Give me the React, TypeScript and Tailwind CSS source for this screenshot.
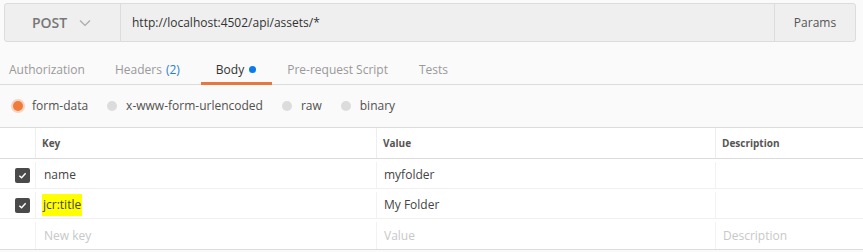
const tabs = [
  { label: "Authorization", cls: "" },
  { label: "Headers", count: "(2)", cls: "ml-[30px]" },
  { label: "Body", active: true, cls: "ml-[21px] pl-[15px] pr-[16px]" },
  { label: "Pre-request Script", cls: "ml-[15px]" },
  { label: "Tests", cls: "ml-[31px]" },
];

const modes = ["form-data", "x-www-form-urlencoded", "raw", "binary"];

const rows = [
  { key: "name", value: "myfolder" },
  { key: "jcr:title", value: "My Folder", highlight: true },
];

const Check = () => (
  <span className="flex h-[15px] w-[15px] items-center justify-center rounded-[2px] bg-[#4a4a4a]">
    <svg width="9" height="9" viewBox="0 0 10 10" fill="none">
      <path d="M1.5 5.2 L4 7.5 L8.5 2.5" stroke="#fff" strokeWidth="1.6" />
    </svg>
  </span>
);

export default function App() {
  return (
    <div
      className="h-[252px] w-[863px] overflow-hidden bg-[#fafafa] text-[#505050]"
      style={{ fontFamily: '"Open Sans", sans-serif' }}
    >
      {/* Request bar */}
      <div className="pl-1 pr-[7px] pt-[3px]">
        <div className="flex h-[39px] rounded-[3px] border border-[#dcdcdc] bg-[#efefef]">
          <div className="flex w-[116px] items-center justify-center gap-3 border-r border-[#dcdcdc] pr-1 pl-[2px] text-[14px] font-semibold text-[#777]">
            POST
            <svg width="12" height="8" viewBox="0 0 12 8" fill="none">
              <path d="M1 1.5 L6 6.5 L11 1.5" stroke="#aaa" strokeWidth="1.2" />
            </svg>
          </div>
          <div className="flex flex-1 items-center pl-[11px] text-[12px] text-[#333]">
            http://localhost:4502/api/assets/*
          </div>
          <div className="flex w-[81px] items-center justify-center border-l border-[#dcdcdc] text-[12px] text-[#555]">
            Params
          </div>
        </div>
      </div>

      {/* Tabs */}
      <div className="mt-[13px] flex h-[30px] border-b border-[#dcdcdc] pl-[9px] text-[12px]">
        {tabs.map((t) => (
          <div
            key={t.label}
            className={`relative flex items-center ${t.cls} ${
              t.active ? "text-[#333]" : "text-[#999]"
            }`}
          >
            {t.label}
            {t.count && <span className="ml-1 text-[#2a7fd4]">{t.count}</span>}
            {t.active && (
              <span className="ml-[5px] h-[7px] w-[7px] rounded-full bg-[#097bed]" />
            )}
            {t.active && (
              <span className="absolute bottom-[-1px] left-0 right-0 h-[3px] bg-[#e8773d]" />
            )}
          </div>
        ))}
      </div>

      {/* Body modes */}
      <div className="flex h-[42px] items-center gap-[19px] pl-[13px] text-[12px] text-[#505050]">
        {modes.map((m, i) => (
          <label key={m} className="flex items-center gap-[9px]">
            <span
              className={`h-[10px] w-[10px] rounded-full ${
                i === 0 ? "bg-[#f07b3a] ring-2 ring-[#f5d4c0]" : "bg-[#dcdcdc]"
              }`}
            />
            {m}
          </label>
        ))}
      </div>

      {/* Key/value table */}
      <div className="border-y border-[#dcdcdc] bg-white text-[12px]">
        <div className="grid h-[31px] grid-cols-[35px_341px_339px_1fr] border-b border-[#dcdcdc] text-[10px] font-bold text-[#555]">
          <div />
          <div className="flex items-center border-l border-[#eee] pl-[6px]">Key</div>
          <div className="flex items-center border-l border-[#eee] pl-[6px]">Value</div>
          <div className="flex items-center border-l border-[#eee] pl-[6px]">Description</div>
        </div>
        {rows.map((r) => (
          <div
            key={r.key}
            className="grid h-[30px] grid-cols-[35px_341px_339px_1fr] border-b border-[#f0f0f0] pt-[3px] text-[#444]"
          >
            <div className="flex items-center justify-end pr-[5px]">
              <Check />
            </div>
            <div className="flex items-center border-l border-[#f2f2f2] pl-[6px]">
              <span className={r.highlight ? "bg-[#ffff00] px-[1px] py-[2px]" : "pl-[2px]"}>
                {r.key}
              </span>
            </div>
            <div className="flex items-center border-l border-[#f2f2f2] pl-[7px]">{r.value}</div>
            <div className="border-l border-[#f2f2f2]" />
          </div>
        ))}
        <div className="grid h-[30px] grid-cols-[35px_341px_339px_1fr] pt-[3px] text-[#c8c8c8]">
          <div />
          <div className="flex items-center border-l border-[#f2f2f2] pl-[8px]">New key</div>
          <div className="flex items-center border-l border-[#f2f2f2] pl-[7px]">Value</div>
          <div className="flex items-center border-l border-[#f2f2f2] pl-[7px]">Description</div>
        </div>
      </div>
    </div>
  );
}
